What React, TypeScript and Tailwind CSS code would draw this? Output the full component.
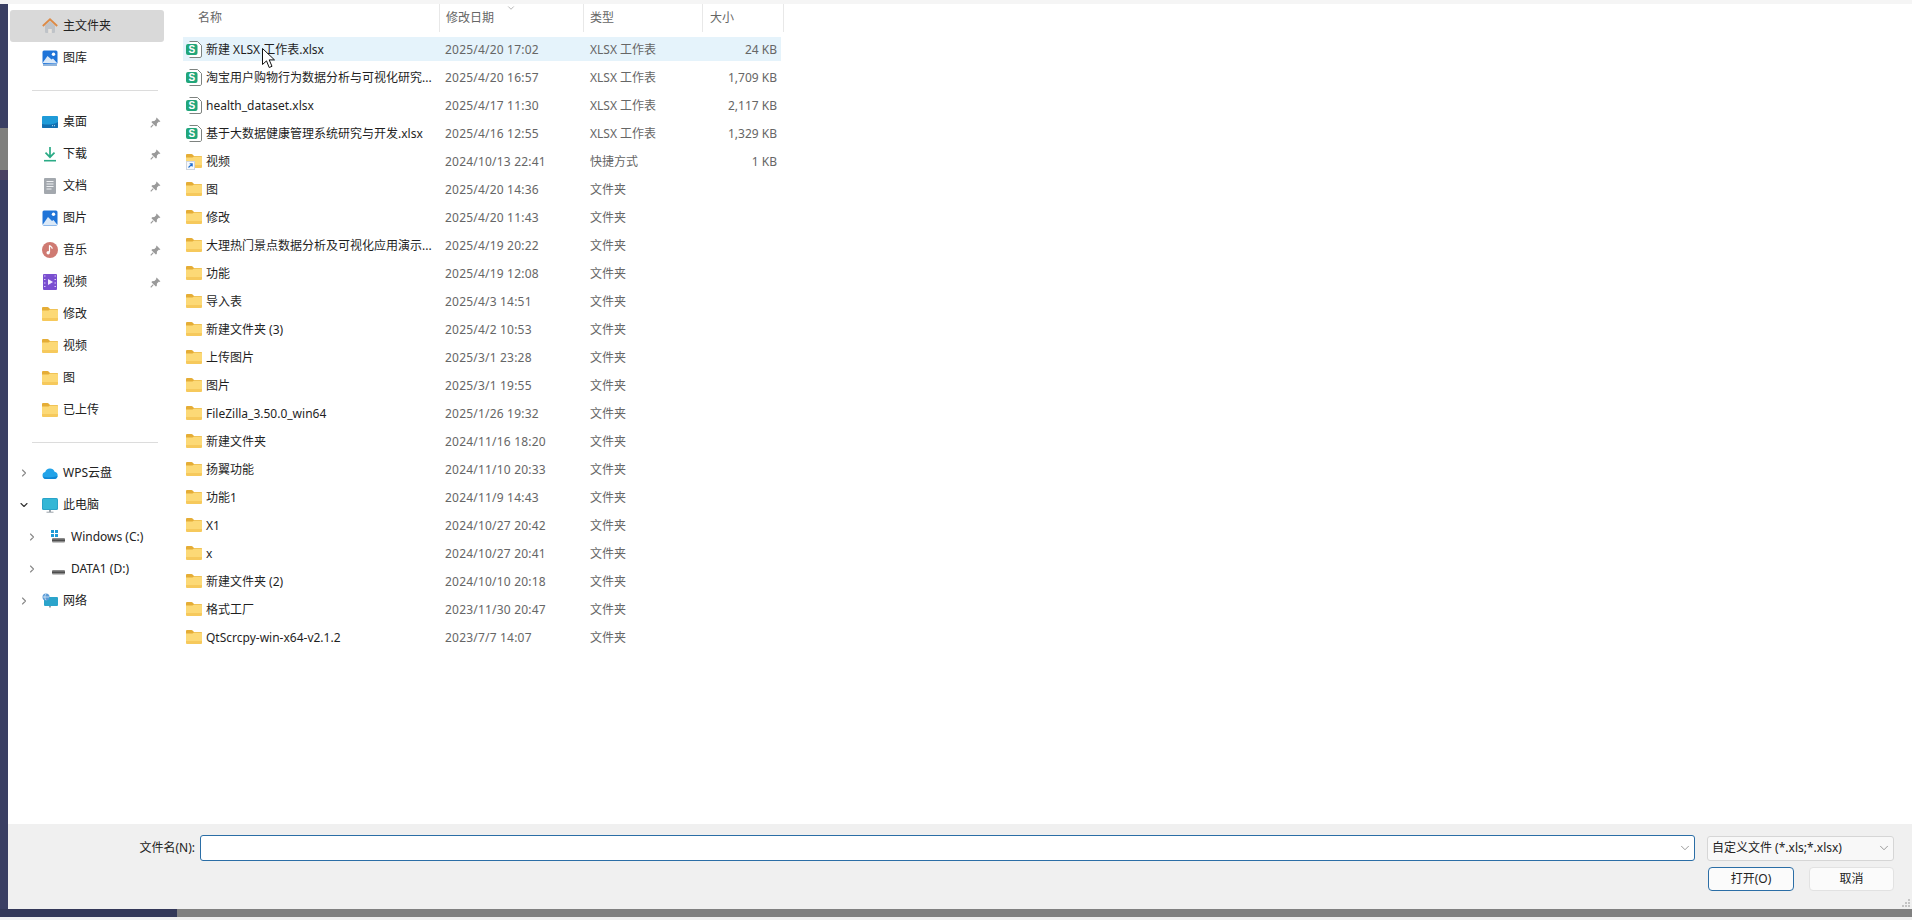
import React from 'react';
import { ChevronDown, ChevronRight } from 'lucide-react';

type IconProps = { className?: string };

const FolderIcon = ({ className = 'w-4 h-[14px]' }: IconProps) => (
  <svg viewBox="0 0 16 14" className={className}>
    <path d="M0 1.2C0 .5.5 0 1.2 0h4.3c.5 0 .8.2 1.1.5L8 2h6.8c.7 0 1.2.5 1.2 1.2V5H0z" fill="#e5ad36" />
    <path d="M0 3.6h6.5L8 2.6h6.8c.7 0 1.2.5 1.2 1.2v9c0 .7-.5 1.2-1.2 1.2H1.2C.5 14 0 13.500 0 12.800z" fill="#fcd976" />
    <path d="M0 11h16v1.800c0 .7-.5 1.200-1.200 1.200H1.200C.5 14 0 13.500 0 12.800z" fill="#f6c95c" />
  </svg>
);

const ShortcutFolder = () => (
  <span className="relative block w-4 h-[14px]">
    <FolderIcon />
    <svg viewBox="0 0 9 9" className="absolute left-0 bottom-[-2px] w-[9px] h-[9px]">
      <rect x="0.5" y="0.5" width="8" height="8" fill="#f7f9fc" stroke="#cfd5dd" />
      <path d="M2.500 6.500 6 3M3.600 2.800H6.200V5.400" fill="none" stroke="#1f6fd0" strokeWidth="1.100" />
    </svg>
  </span>
);

const SheetIcon = () => (
  <svg viewBox="0 0 16 17" className="w-4 h-[17px]">
    <path d="M3.500.5h8l4 4v10.500c0 .8-.6 1.500-1.500 1.500H3.500" fill="#fff" stroke="#6f7572" strokeWidth="0.900" />
    <rect x="0" y="3" width="11.500" height="11" rx="2" fill="#21a67a" />
    <text x="5.800" y="12" textAnchor="middle" fontSize="10" fontWeight="700" fill="#fff" fontFamily="'Liberation Sans',sans-serif">S</text>
  </svg>
);

const HomeIcon = () => (
  <svg viewBox="0 0 16 16" className="w-4 h-4">
    <path d="M3 7.500 8 3l5 4.500V14a1 1 0 0 1-1 1H4a1 1 0 0 1-1-1z" fill="#bfc3c8" />
    <path d="M6.200 15v-4h3.600v4z" fill="#e6e2dd" />
    <path d="M.8 8 8 1.300 15.200 8" fill="none" stroke="#dd8a45" strokeWidth="1.800" />
  </svg>
);

const PictureIcon = ({ frame = false }: { frame?: boolean }) => (
  <svg viewBox="0 0 16 16" className="w-4 h-4">
    {frame && <rect x="1" y="13" width="14" height="3" fill="#8fb4dc" />}
    <rect x="0.500" y="0.500" width="15" height={frame ? 13.500 : 15} rx="1.500" fill="#1f74d8" />
    <circle cx="11.500" cy="4.300" r="1.700" fill="#fff" />
    <path d={frame ? 'M.5 13 5.500 6l4 3.500 1.500-1 4.500 5z' : 'M.5 15 6 7l4 4 1.500-1 4 5z'} fill="#dbe9f8" />
  </svg>
);

const DesktopIcon = () => (
  <svg viewBox="0 0 16 12" className="w-4 h-3">
    <rect width="16" height="12" rx="1" fill="#1f9bd8" />
    <path d="M0 8c5 1 11 1 16-2v5a1 1 0 0 1-1 1H1a1 1 0 0 1-1-1z" fill="#136fb0" />
    <path d="M10 9.700h4" stroke="#bfe6f7" strokeWidth="1" strokeDasharray="1 1" />
  </svg>
);

const DownloadIcon = () => (
  <svg viewBox="0 0 16 16" className="w-4 h-4">
    <path d="M8 1v10M3.500 6.700 8 11.200l4.500-4.500" fill="none" stroke="#2bab86" strokeWidth="1.700" />
    <path d="M2 14.700h12" stroke="#2bab86" strokeWidth="1.600" />
  </svg>
);

const DocIcon = () => (
  <svg viewBox="0 0 16 16" className="w-4 h-4">
    <rect x="2" y="0" width="12" height="16" rx="1" fill="#a3a8ae" />
    <path d="M4.500 3.500h7M4.500 6h7M4.500 8.500h7M4.500 11h5" stroke="#eef0f2" strokeWidth="1" />
  </svg>
);

const MusicIcon = () => (
  <svg viewBox="0 0 16 16" className="w-4 h-4">
    <circle cx="8" cy="8" r="8" fill="#cf7a72" />
    <path d="M7.500 3.500v6.700" stroke="#fff" strokeWidth="1.200" />
    <path d="M7.500 3.300c1 1.500 2.700 1.500 2.700 3.400" fill="none" stroke="#fff" strokeWidth="1.200" />
    <circle cx="6.200" cy="10.700" r="1.700" fill="#fff" />
  </svg>
);

const VideoIcon = () => (
  <svg viewBox="0 0 14 16" className="w-[14px] h-4">
    <rect width="14" height="16" rx="1" fill="#7a4fd0" />
    <path d="M5 5l5 3-5 3z" fill="#f2ecff" />
    <path d="M1 2h1.500M1 5.500h1.500M1 9h1.500M1 12.500h1.500M11.500 2H13M11.500 5.500H13M11.500 9H13M11.500 12.500H13" stroke="#d9c9f7" strokeWidth="1.200" />
  </svg>
);

const CloudIcon = () => (
  <svg viewBox="0 0 16 12" className="w-4 h-3">
    <path d="M4 12a3.500 3.500 0 0 1-.8-6.900A5 5 0 0 1 12.600 4.700 3.700 3.700 0 0 1 12.500 12z" fill="#22a3e8" />
    <path d="M1 9.500c4 1.500 10 1 14.500-.5-.5 1.700-1.600 3-3 3H4c-1.300 0-2.400-1-3-2.500z" fill="#0f86d4" />
  </svg>
);

const MonitorIcon = () => (
  <svg viewBox="0 0 16 15" className="w-4 h-[15px]">
    <path d="M7 12h2v2H7z" fill="#9aa3aa" />
    <path d="M4.500 14.200h7" stroke="#9aa3aa" strokeWidth="1" />
    <rect x="0" y="0" width="16" height="12" rx="1.500" fill="#29a3c9" />
    <rect x="1" y="1" width="14" height="10" rx="1" fill="#34b7d6" />
  </svg>
);

const DriveIcon = ({ windows = false }: { windows?: boolean }) => (
  <svg viewBox="0 0 15 14" className="w-[15px] h-[14px]">
    {windows && (
      <g fill="#1e9ad6">
        <rect x="0" y="0" width="3" height="3" />
        <rect x="4" y="0" width="3" height="3" />
        <rect x="0" y="4" width="3" height="3" />
        <rect x="4" y="4" width="3" height="3" />
      </g>
    )}
    <rect x="1" y="8" width="13" height="4.500" rx="1" fill="#8a8a8a" />
    <rect x="1" y="9.500" width="13" height="1.500" fill="#4d4d4d" />
  </svg>
);

const NetworkIcon = () => (
  <svg viewBox="0 0 16 16" className="w-4 h-4">
    <path d="M7 12.500h2v2H7zM4.500 14.700h7" fill="#9aa3aa" />
    <rect x="2" y="4" width="14" height="9" rx="1" fill="#2ba4cb" />
    <circle cx="4" cy="4" r="3.500" fill="#5a9bd6" />
    <path d="M1 4h6M4 .8c-1.500 2-1.500 4.400 0 6.400" stroke="#e6f1fa" strokeWidth="0.700" fill="none" />
  </svg>
);

const Pin = () => (
  <svg viewBox="0 0 12 12" className="w-[11px] h-[11px]">
    <path d="M7.200.6 11.400 4.800 10.200 5.400 9.800 5 7.600 7.200 7.400 9.800 6.400 10.400 1.600 5.600 2.200 4.600 4.800 4.400 7 2.200 6.600 1.800z" fill="#9a9a9a" />
    <path d="M3.600 8.400.8 11.200" stroke="#9a9a9a" strokeWidth="1.200" />
  </svg>
);

const quick: { label: string; icon: React.ReactNode; pin?: boolean }[] = [
  { label: '桌面', icon: <DesktopIcon />, pin: true },
  { label: '下载', icon: <DownloadIcon />, pin: true },
  { label: '文档', icon: <DocIcon />, pin: true },
  { label: '图片', icon: <PictureIcon />, pin: true },
  { label: '音乐', icon: <MusicIcon />, pin: true },
  { label: '视频', icon: <VideoIcon />, pin: true },
  { label: '修改', icon: <FolderIcon /> },
  { label: '视频', icon: <FolderIcon /> },
  { label: '图', icon: <FolderIcon /> },
  { label: '已上传', icon: <FolderIcon /> },
];

const SideItem = ({ label, icon, pin, active }: { label: string; icon: React.ReactNode; pin?: boolean; active?: boolean }) => (
  <div className={`ml-[2px] w-[154px] h-8 flex items-center pl-8 pr-[3px] rounded-[3px] ${active ? 'bg-[#d9d9d9]' : ''}`}>
    <span className="w-4 flex justify-center shrink-0">{icon}</span>
    <span className="ml-[5px] flex-1 text-[#222]">{label}</span>
    {pin && <Pin />}
  </div>
);

const TreeItem = ({ label, icon, open, sub }: { label: string; icon: React.ReactNode; open?: boolean; sub?: boolean }) => (
  <div className={`ml-[2px] w-[154px] h-8 flex items-center ${sub ? 'pl-4' : 'pl-2'}`}>
    {open ? (
      <ChevronDown className="w-3 h-3 text-[#333] shrink-0" strokeWidth={2.250} />
    ) : (
      <ChevronRight className="w-3 h-3 text-[#888] shrink-0" strokeWidth={2.250} />
    )}
    <span className="ml-3 w-4 flex justify-center shrink-0">{icon}</span>
    <span className="ml-[5px] text-[#222]">{label}</span>
  </div>
);

const Sidebar = () => (
  <aside className="w-[175px] shrink-0 pt-[6px]">
    <SideItem label="主文件夹" icon={<HomeIcon />} active />
    <SideItem label="图库" icon={<PictureIcon frame />} />
    <div className="mt-4 mb-[15px] ml-6 w-[126px] h-px bg-[#dcdcdc]" />
    {quick.map((q, i) => (
      <SideItem key={i} {...q} />
    ))}
    <div className="mt-4 mb-[14px] ml-6 w-[126px] h-px bg-[#dcdcdc]" />
    <TreeItem label="WPS云盘" icon={<CloudIcon />} />
    <TreeItem label="此电脑" icon={<MonitorIcon />} open />
    <TreeItem label="Windows (C:)" icon={<DriveIcon windows />} sub />
    <TreeItem label="DATA1 (D:)" icon={<DriveIcon />} sub />
    <TreeItem label="网络" icon={<NetworkIcon />} />
  </aside>
);

type Kind = 'sheet' | 'link' | 'folder';
const SHEET = 'XLSX 工作表';
const DIR = '文件夹';

const files: { name: string; date: string; type: string; size?: string; kind: Kind }[] = [
  { name: '新建 XLSX 工作表.xlsx', date: '2025/4/20 17:02', type: SHEET, size: '24 KB', kind: 'sheet' },
  { name: '淘宝用户购物行为数据分析与可视化研究...', date: '2025/4/20 16:57', type: SHEET, size: '1,709 KB', kind: 'sheet' },
  { name: 'health_dataset.xlsx', date: '2025/4/17 11:30', type: SHEET, size: '2,117 KB', kind: 'sheet' },
  { name: '基于大数据健康管理系统研究与开发.xlsx', date: '2025/4/16 12:55', type: SHEET, size: '1,329 KB', kind: 'sheet' },
  { name: '视频', date: '2024/10/13 22:41', type: '快捷方式', size: '1 KB', kind: 'link' },
  { name: '图', date: '2025/4/20 14:36', type: DIR, kind: 'folder' },
  { name: '修改', date: '2025/4/20 11:43', type: DIR, kind: 'folder' },
  { name: '大理热门景点数据分析及可视化应用演示...', date: '2025/4/19 20:22', type: DIR, kind: 'folder' },
  { name: '功能', date: '2025/4/19 12:08', type: DIR, kind: 'folder' },
  { name: '导入表', date: '2025/4/3 14:51', type: DIR, kind: 'folder' },
  { name: '新建文件夹 (3)', date: '2025/4/2 10:53', type: DIR, kind: 'folder' },
  { name: '上传图片', date: '2025/3/1 23:28', type: DIR, kind: 'folder' },
  { name: '图片', date: '2025/3/1 19:55', type: DIR, kind: 'folder' },
  { name: 'FileZilla_3.50.0_win64', date: '2025/1/26 19:32', type: DIR, kind: 'folder' },
  { name: '新建文件夹', date: '2024/11/16 18:20', type: DIR, kind: 'folder' },
  { name: '扬翼功能', date: '2024/11/10 20:33', type: DIR, kind: 'folder' },
  { name: '功能1', date: '2024/11/9 14:43', type: DIR, kind: 'folder' },
  { name: 'X1', date: '2024/10/27 20:42', type: DIR, kind: 'folder' },
  { name: 'x', date: '2024/10/27 20:41', type: DIR, kind: 'folder' },
  { name: '新建文件夹 (2)', date: '2024/10/10 20:18', type: DIR, kind: 'folder' },
  { name: '格式工厂', date: '2023/11/30 20:47', type: DIR, kind: 'folder' },
  { name: 'QtScrcpy-win-x64-v2.1.2', date: '2023/7/7 14:07', type: DIR, kind: 'folder' },
];

const FileTable = () => (
  <div className="flex-1 flex flex-col">
    {/* Column headers */}
    <div className="w-[601px] h-7 flex text-[#666] relative">
      <div className="w-[257px] pl-[15px] pt-[6px] border-r border-[#e8e8e8]">名称</div>
      <div className="w-[144px] pl-[6px] pt-[6px] border-r border-[#e8e8e8]">修改日期</div>
      <div className="w-[119px] pl-[6px] pt-[6px] border-r border-[#e8e8e8]">类型</div>
      <div className="w-[81px] pl-[7px] pt-[6px] border-r border-[#e8e8e8]">大小</div>
      <ChevronDown className="absolute left-[323px] top-[-1px] w-[10px] h-[10px] text-[#888]" strokeWidth={1.500} />
    </div>
    {/* Rows */}
    <div className="mt-[5px] flex flex-col gap-1">
      {files.map((f, i) => (
        <div
          key={i}
          className={`w-[598px] h-6 grid grid-cols-[262px_145px_112px_75px] items-center ${i === 0 ? 'bg-[#e5f3fb]' : ''}`}
        >
          <div className="flex items-center pl-[3px] text-[#1f1f1f] whitespace-nowrap">
            <span className="w-4 flex justify-center shrink-0">
              {f.kind === 'sheet' ? <SheetIcon /> : f.kind === 'link' ? <ShortcutFolder /> : <FolderIcon />}
            </span>
            <span className="ml-1 pt-px">{f.name}</span>
          </div>
          <div className="pt-px text-[#666] tracking-[0.2px]">{f.date}</div>
          <div className="pt-px text-[#666]">{f.type}</div>
          <div className="pt-px text-[#666] text-right">{f.size}</div>
        </div>
      ))}
    </div>
  </div>
);

const Footer = () => (
  <footer className="h-[85px] shrink-0 bg-[#f0f0f0] pt-[11px] pr-[18px] relative">
    <div className="flex items-center h-[26px]">
      <label className="w-[192px] pr-[5px] text-right text-[#222]">文件名(N):</label>
      <div className="w-[1495px] h-[26px] flex items-center justify-end pr-[2px] bg-white border border-[#2b6ea6] rounded-[3px]">
        <ChevronDown className="w-[14px] h-[14px] text-[#777]" strokeWidth={1.250} />
      </div>
      <div className="ml-[12px] w-[187px] h-[25px] flex items-center justify-between pl-1 pr-[2px] bg-[#f8f8f8] border border-[#d6d6d6] rounded-[3px] text-[#222]">
        <span>自定义文件 (*.xls;*.xlsx)</span>
        <ChevronDown className="w-[14px] h-[14px] text-[#777]" strokeWidth={1.250} />
      </div>
    </div>
    <div className="mt-[6px] flex justify-end gap-[15px]">
      <button className="w-[86px] h-6 bg-[#fbfbfb] border border-[#2b6ea6] rounded-[4px] text-[#222]">打开(O)</button>
      <button className="w-[85px] h-6 bg-[#fbfbfb] border border-[#e2e2e2] rounded-[4px] text-[#222]">取消</button>
    </div>
    <div className="absolute right-[2px] bottom-[2px] grid grid-cols-3 gap-px">
      {[0, 1, 2, 3, 4, 5, 6, 7, 8].map((n) => (
        <span key={n} className={`w-[2px] h-[2px] ${n === 0 || n === 1 || n === 3 ? 'bg-transparent' : 'bg-[#c4c4c4]'}`} />
      ))}
    </div>
  </footer>
);

export default function App() {
  return (
    <div className="w-[1912px] h-[920px] flex flex-col overflow-hidden bg-white text-[12px] leading-[16px] relative font-['Noto_Sans','Noto_Sans_CJK_SC',sans-serif]">
      <div className="h-1 shrink-0 bg-[#f5f5f5]" />
      <div className="flex-1 flex min-h-0">
        {/* Window behind the dialog, left edge */}
        <div className="w-2 shrink-0 flex flex-col">
          <div className="h-[124px] bg-[#3a3f63]" />
          <div className="h-[42px] bg-[#7f7f7d]" />
          <div className="h-[10px] bg-[#4a4262]" />
          <div className="flex-1 bg-[#3a3f63]" />
        </div>
        <div className="flex-1 flex flex-col min-w-0">
          <div className="flex-1 flex min-h-0">
            <Sidebar />
            <FileTable />
          </div>
          <Footer />
        </div>
      </div>
      <div className="h-2 shrink-0 flex">
        <div className="w-[177px] bg-[#333858]" />
        <div className="flex-1 bg-[#808080]" />
      </div>
      <div className="h-[3px] shrink-0 bg-[#f0f0f0]" />

      {/* Mouse pointer */}
      <svg viewBox="0 0 13 21" className="absolute left-[262px] top-[48px] w-[13px] h-[21px]">
        <path d="M.5.5v16l4-3.600 2.700 6.600 2.800-1.200-2.800-6.400h5.300z" fill="#fff" stroke="#111" strokeWidth="1" />
      </svg>
    </div>
  );
}
